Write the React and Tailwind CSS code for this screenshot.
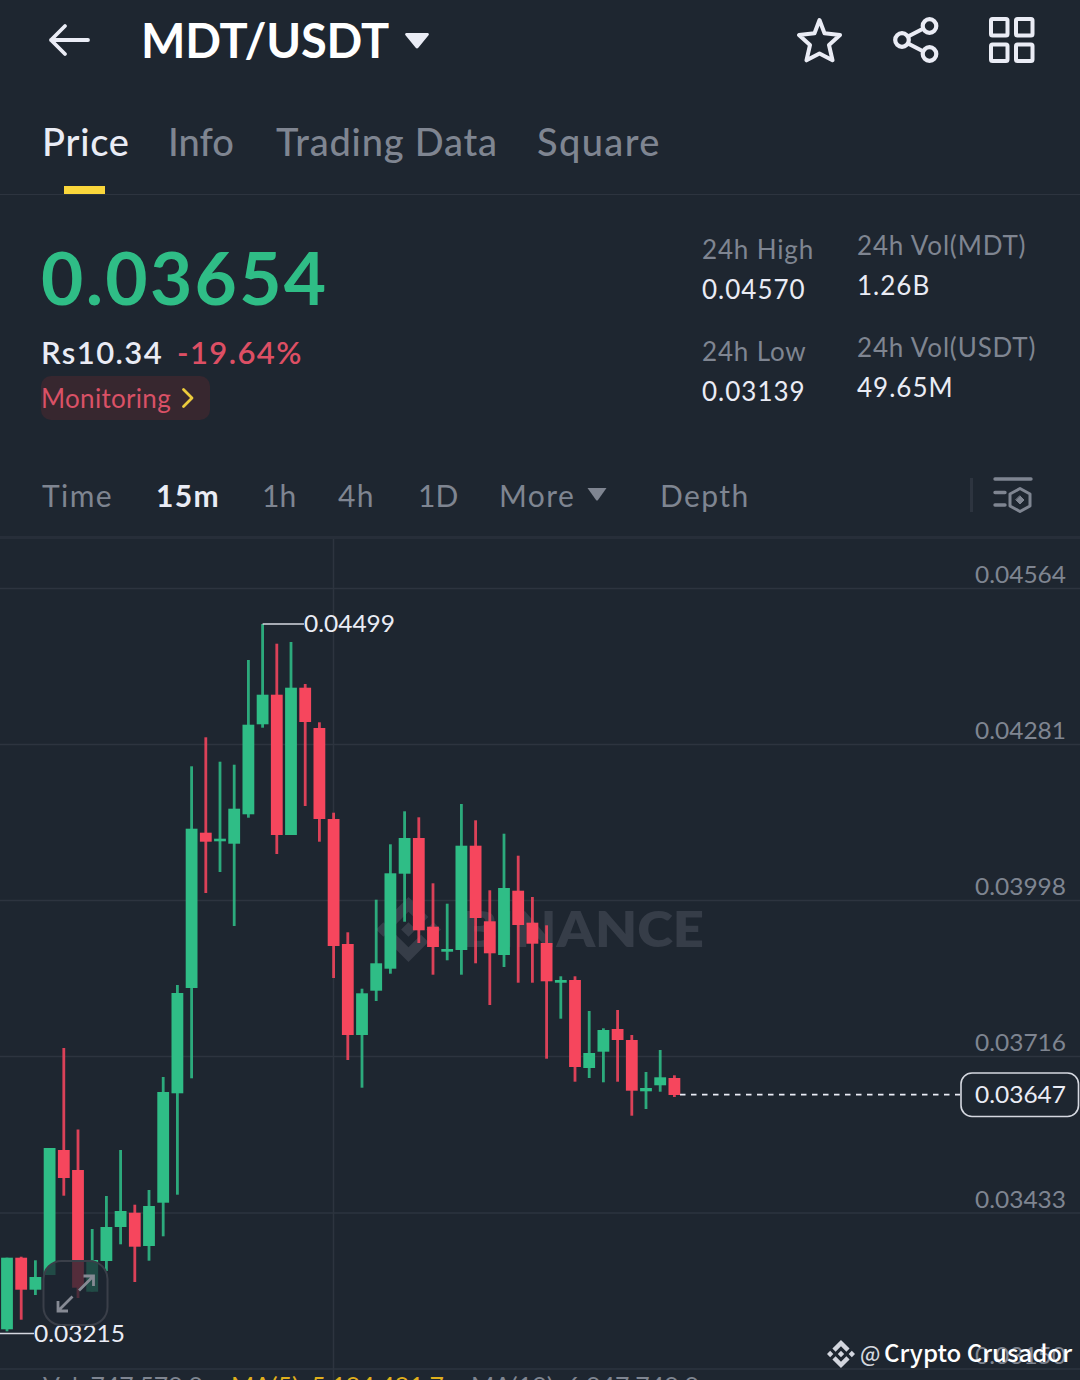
import React from 'react';
import { SiBinance } from 'react-icons/si';

const GREEN = '#2fbd86';
const RED = '#f6465d';

// [direction, high, bodyTop, bodyBottom, low] in chart units
const candles = [
  ['up', 1257.7, 1257.7, 1329.3, 1331.3],
  ['down', 1256.7, 1257.7, 1289.7, 1319.7],
  ['up', 1260.3, 1277, 1289.7, 1295],
  ['up', 1148, 1148, 1275, 1275],
  ['down', 1048, 1150, 1178, 1195.7],
  ['down', 1129.5, 1170, 1287.7, 1298],
  ['up', 1229, 1260, 1291.7, 1291.7],
  ['up', 1196, 1227, 1261, 1271],
  ['up', 1150, 1211, 1227, 1244.3],
  ['down', 1204.7, 1212.7, 1246.7, 1282],
  ['up', 1190, 1206, 1246, 1260.7],
  ['up', 1077, 1092, 1202.7, 1236.3],
  ['up', 985, 993, 1093.3, 1194.7],
  ['up', 766.3, 828.7, 988, 1078.3],
  ['down', 737.3, 832.7, 841.7, 893],
  ['up', 761.7, 838.7, 841.3, 872],
  ['up', 764.7, 808.7, 843.7, 926],
  ['up', 660, 724.7, 814.3, 817.7],
  ['up', 624, 694.7, 724.3, 727.7],
  ['down', 643.7, 694.7, 835, 854],
  ['up', 642, 687.7, 835, 835],
  ['down', 684, 687.7, 722, 806],
  ['down', 722.3, 728, 819, 841.7],
  ['down', 812.7, 819, 946, 978],
  ['down', 932.3, 944, 1035, 1060],
  ['up', 988.7, 993.3, 1035, 1087.7],
  ['up', 899.7, 963.3, 990.7, 1001],
  ['up', 844.3, 873.3, 968.7, 973.7],
  ['up', 811.3, 838, 873.7, 921.7],
  ['down', 817.3, 838, 930.3, 943],
  ['down', 883.3, 926.7, 947, 974.7],
  ['up', 903.7, 949, 951.7, 960.3],
  ['up', 804, 845.7, 950, 974.7],
  ['down', 820.3, 845.7, 918, 963.3],
  ['down', 890.3, 921.3, 953.3, 1005],
  ['up', 833.7, 888, 955, 967],
  ['down', 855.7, 890.7, 925, 982.7],
  ['down', 897, 922.7, 943.7, 982.7],
  ['down', 925.3, 943, 981.3, 1058.7],
  ['up', 976.3, 980, 982.7, 1018.7],
  ['down', 976.3, 980, 1067, 1081.7],
  ['up', 1011, 1053, 1068, 1078],
  ['up', 1028.3, 1030, 1051.7, 1082.3],
  ['down', 1010, 1029, 1040, 1081.7],
  ['down', 1035, 1040, 1090.7, 1115.7],
  ['up', 1072, 1088, 1091.3, 1109],
  ['up', 1050, 1077.3, 1085.3, 1091.7],
  ['down', 1075.3, 1078, 1095, 1097],
];

const gridLines = [
  { y: 588.5, label: '0.04564' },
  { y: 744.5, label: '0.04281' },
  { y: 900.5, label: '0.03998' },
  { y: 1056.5, label: '0.03716' },
  { y: 1213, label: '0.03433' },
  { y: 1369, label: '0.03150' },
];

const Header = () => (
  <header className="flex h-[79px] items-center pr-[45px] pl-[48px]">
    <svg width="42" height="36" viewBox="0 0 42 36" fill="none" stroke="#eaecf5" strokeWidth="3.8" strokeLinecap="round" strokeLinejoin="round">
      <path d="M40 18H3M17 4 3 18l14 14" />
    </svg>
    <h1 className="ml-[51px] w-[264px] text-[47px] leading-[54px] font-bold tracking-[-0.2px] whitespace-nowrap text-white">
      MDT/USDT
    </h1>
    <svg width="24" height="16" viewBox="0 0 24 16" fill="#eaecf5" className="mt-[2px]">
      <path d="M1.5 0h21a1.3 1.3 0 0 1 1 2.2L13.3 14.7a1.7 1.7 0 0 1-2.6 0L.5 2.2A1.3 1.3 0 0 1 1.5 0z" />
    </svg>
    <div className="ml-auto flex items-center gap-[50px]">
      <svg width="46" height="46" viewBox="0 0 46 46" fill="none" stroke="#eaecf5" strokeWidth="4" strokeLinejoin="round">
        <path d="M22.5 3 27.5 16.3 43 18 32 28 35.5 43.3 22.5 36.5 9.5 43.3 13 28 2 18 17.5 16.3z" />
      </svg>
      <svg width="46" height="46" viewBox="0 0 46 46" fill="none" stroke="#eaecf5" strokeWidth="4.2">
        <circle cx="9" cy="23" r="6.8" />
        <circle cx="36.5" cy="9" r="6.8" />
        <circle cx="36.5" cy="37" r="6.8" />
        <path d="M15 19.5 30.5 11.5M15 26.5 30.5 34.5" />
      </svg>
      <svg width="46" height="46" viewBox="0 0 46 46" fill="none" stroke="#eaecf5" strokeWidth="4">
        <rect x="2" y="2" width="16.5" height="16.5" rx="1.5" />
        <rect x="27" y="2" width="16.5" height="16.5" rx="1.5" />
        <rect x="2" y="27.5" width="16.5" height="16.5" rx="1.5" />
        <rect x="27" y="27.5" width="16.5" height="16.5" rx="1.5" />
      </svg>
    </div>
  </header>
);

const Tabs = () => (
  <nav className="flex h-[116px] border-b border-[#2d343f] pt-[38px] pl-[42px] text-[38px] leading-[48px] font-medium tracking-[0.8px] whitespace-nowrap text-[#7f8591]">
    <div className="flex w-[126px] flex-col">
      <span className="text-[#eaecf5]">Price</span>
      <span className="mt-[21px] ml-[22px] h-2 w-[41px] bg-[#fad63b]" />
    </div>
    <span className="w-[108px] tracking-normal">Info</span>
    <span className="w-[261px]">Trading Data</span>
    <span className="tracking-[1.4px]">Square</span>
  </nav>
);

const Stat = ({ label, value }) => (
  <div className="text-[26px] leading-[40px] whitespace-nowrap">
    <p className="tracking-[0.85px] text-[#7f8591]">{label}</p>
    <p className="tracking-[1px] text-[#eaecf5]">{value}</p>
  </div>
);

const Summary = () => (
  <section className="flex h-[260px] pl-[41px]">
    <div className="flex w-[661px] flex-col items-start pt-[45px]">
      <p className="text-[73px] leading-[74px] font-bold tracking-[2.3px] text-[#2fbd86]">0.03654</p>
      <p className="mt-[18px] flex text-[31px] leading-[40px] font-semibold tracking-[1.4px]">
        <span className="w-[136px] text-[#eaecf5]">Rs10.34</span>
        <span className="text-[#dd4f64]">-19.64%</span>
      </p>
      <div className="mt-[4px] flex h-[44px] w-[169px] items-center rounded-[10px] bg-[#37272f] text-[26px] tracking-[0.3px] text-[#d95166]">
        <span className="w-[140px]">Monitoring</span>
        <svg width="14" height="22" viewBox="0 0 14 22" fill="none" stroke="#eccb3c" strokeWidth="2.8" strokeLinecap="round" strokeLinejoin="round">
          <path d="M2.5 2.5 11 11 2.5 19.5" />
        </svg>
      </div>
    </div>
    <div className="flex w-[155px] flex-col gap-[22px] pt-[34px]">
      <Stat label="24h High" value="0.04570" />
      <Stat label="24h Low" value="0.03139" />
    </div>
    <div className="flex flex-col gap-[22px] pt-[30px]">
      <Stat label="24h Vol(MDT)" value="1.26B" />
      <Stat label="24h Vol(USDT)" value="49.65M" />
    </div>
  </section>
);

const Intervals = () => (
  <div className="flex h-[81px] items-center pl-[42px] text-[30px] tracking-[1.4px] whitespace-nowrap text-[#7f8591]">
    <span className="w-[114px]">Time</span>
    <span className="w-[106px] font-bold text-[#eaecf5]">15m</span>
    <span className="w-[76px] tracking-normal">1h</span>
    <span className="w-[80px]">4h</span>
    <span className="w-[81px] tracking-normal">1D</span>
    <span className="w-[88px]">More</span>
    <svg width="20" height="13" viewBox="0 0 20 13" fill="#7f8591" className="mr-[53px] mb-[2px]">
      <path d="M.5 0h19L11 12a1.3 1.3 0 0 1-2 0z" />
    </svg>
    <span>Depth</span>
    <span className="mb-[2px] ml-auto h-[34px] w-[3px] bg-[#2d343f]" />
    <svg width="40" height="38" viewBox="0 0 40 38" fill="none" stroke="#7f8591" strokeWidth="3.4" strokeLinecap="round" strokeLinejoin="round" className="mr-[47px] mb-[1px] ml-[20px]">
      <path d="M2 3h36M2 16.5h10M2 29h10" />
      <path d="M27 12.5 37 18v12L27 35.500 17 30V18z" strokeWidth="3" />
      <path d="M27 20 31 24 27 28 23 24z" fill="#7f8591" strokeWidth="1" />
    </svg>
  </div>
);

const Chart = () => (
  <svg width="1080" height="844" viewBox="0 536 1080 844" className="block">
    {/* Grid */}
    <rect x="0" y="536" width="1080" height="3" fill="#272e39" />
    <path d="M333.5 539V1380" stroke="#2d343f" strokeWidth="1.5" />
    {gridLines.map((line) => (
      <path key={line.label} d={`M0 ${line.y}H1080`} stroke="#2d343f" strokeWidth="1.6" />
    ))}

    {/* Brand watermark */}
    <SiBinance size={65} x="376" y="897" color="#363d48" />
    <text x="461" y="947" fontSize="49.5" fontWeight="800" fill="#363d48" textLength="243" lengthAdjust="spacingAndGlyphs">
      BINANCE
    </text>

    {/* Candles */}
    {candles.map(([dir, high, top, bottom, low], i) => {
      const x = 7 + i * 14.2;
      return (
        <g key={i} fill={dir === 'up' ? GREEN : RED}>
          <rect x={x - 1.4} y={high} width="2.8" height={low - high} opacity="0.88" />
          <rect x={x - 5.9} y={top} width="11.8" height={bottom - top} />
        </g>
      );
    })}

    {/* Axis labels */}
    <g fontSize="23" fill="#7f8591">
      {gridLines.map((line) => (
        <text key={line.label} x="975" y={line.y - 5.5} textLength="91" lengthAdjust="spacingAndGlyphs">
          {line.label}
        </text>
      ))}
    </g>

    {/* High and low markers */}
    <path d="M262.6 624H304M0 1333.5H34" stroke="#d5d8e0" strokeWidth="1.6" />
    <g fontSize="23" fill="#eaecf5">
      <text x="304" y="632" textLength="91" lengthAdjust="spacingAndGlyphs">0.04499</text>
      <text x="34" y="1342" textLength="91" lengthAdjust="spacingAndGlyphs">0.03215</text>
    </g>

    {/* Last price */}
    <path d="M680 1094.7H960" stroke="#eaecf5" strokeWidth="1.8" strokeDasharray="5.5 5.5" />
    <rect x="961" y="1073" width="117.5" height="43.5" rx="11" fill="#1e2630" stroke="#d5d8e0" strokeWidth="1.6" />
    <text x="975" y="1103" fontSize="23" fill="#eaecf5" textLength="91" lengthAdjust="spacingAndGlyphs">0.03647</text>

    {/* Expand button */}
    <rect x="43.5" y="1261" width="64" height="64" rx="18" fill="#1e2630" fillOpacity="0.75" stroke="#3a3f49" strokeWidth="2" />
    <path
      d="M79 1290.5 93 1276.5M83.5 1276H93.5V1286M72.5 1296.5 58.5 1310.5M58 1301V1311H68"
      fill="none"
      stroke="#868a94"
      strokeWidth="2.8"
    />

    {/* Volume indicators */}
    <g fontSize="23" fill="#7f8591">
      <text x="43" y="1393.5" textLength="160" lengthAdjust="spacingAndGlyphs">Vol: 747,570.0</text>
      <text x="231" y="1393.5" textLength="213" lengthAdjust="spacingAndGlyphs" fill="#e0b01c">MA(5): 5,194,491.7</text>
      <text x="471" y="1393.5" textLength="228" lengthAdjust="spacingAndGlyphs">MA(10): 6,047,740.0</text>
    </g>
  </svg>
);

const Credit = () => (
  <div className="absolute top-[1335px] left-[827px] flex h-[36px] items-center font-['Noto_Sans_CJK_SC',sans-serif] whitespace-nowrap">
    <SiBinance className="mt-[2px] h-[28px] w-[28px] text-[#d3d6de]" />
    <span className="ml-[5px] w-[24px] text-[21px] leading-[36px] font-medium text-[#d3d6de]">@</span>
    <span className="-mt-[3px] text-[24px] leading-[36px] font-medium text-white">Crypto Crusador</span>
  </div>
);

export default function App() {
  return (
    <div className="relative h-[1380px] w-[1080px] overflow-hidden bg-[#1e2630] font-['Lato','Liberation_Sans',sans-serif]">
      <Header />
      <Tabs />
      <Summary />
      <Intervals />
      <Chart />
      <Credit />
    </div>
  );
}
